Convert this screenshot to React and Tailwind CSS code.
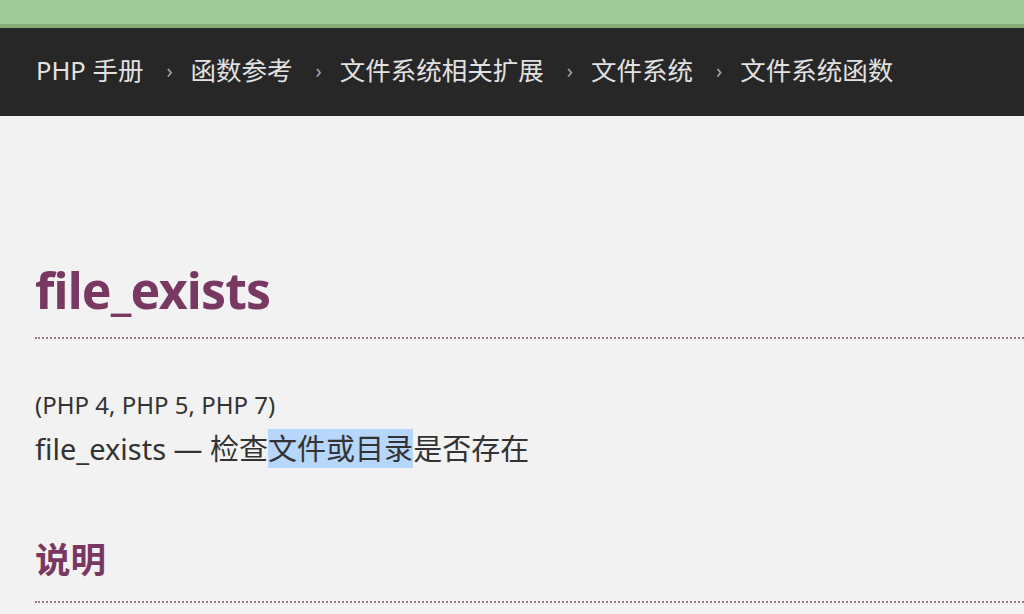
import React from 'react';

const crumbs = ['PHP 手册', '函数参考', '文件系统相关扩展', '文件系统', '文件系统函数'];

export default function App() {
  return (
    <div className="min-h-[614px] bg-[#f2f2f2] font-['Noto_Sans','Noto_Sans_CJK_SC',sans-serif] overflow-hidden">
      <div className="h-[24px] bg-[#a0ca98]" />
      <div className="h-[4px] bg-[#84ad7b]" />
      <nav className="h-[88px] bg-[#272727] flex items-center pb-[3px] pl-[36px] text-[25.5px] text-[#e2e2e2]">
        {crumbs.map((c, i) => (
          <React.Fragment key={c}>
            {i > 0 && <span className="ml-[23px] mr-[18px] text-[20px] text-[#a8a8a8]">›</span>}
            <span>{c}</span>
          </React.Fragment>
        ))}
      </nav>

      <div className="pl-[35px] pt-[144px]">
        <h1 className="text-[50px] leading-[60px] font-bold text-[#793862] tracking-[-0.8px]">file_exists</h1>
        <div className="mt-[17px] border-b-2 border-dotted border-[#a0787e]" />

        <p className="mt-[50px] text-[24px] leading-[32px] text-[#333]">(PHP 4, PHP 5, PHP 7)</p>
        <p className="mt-[6px] text-[29px] leading-[44px] text-[#333]">
          file_exists — 检查<span className="bg-[#b7d6fb]">文件或目录</span>是否存在
        </p>

        <h2 className="mt-[66px] text-[35.5px] leading-[44px] font-bold text-[#793862]">说明</h2>
        <div className="mt-[20px] border-b-2 border-dotted border-[#a0787e]" />
      </div>
    </div>
  );
}
